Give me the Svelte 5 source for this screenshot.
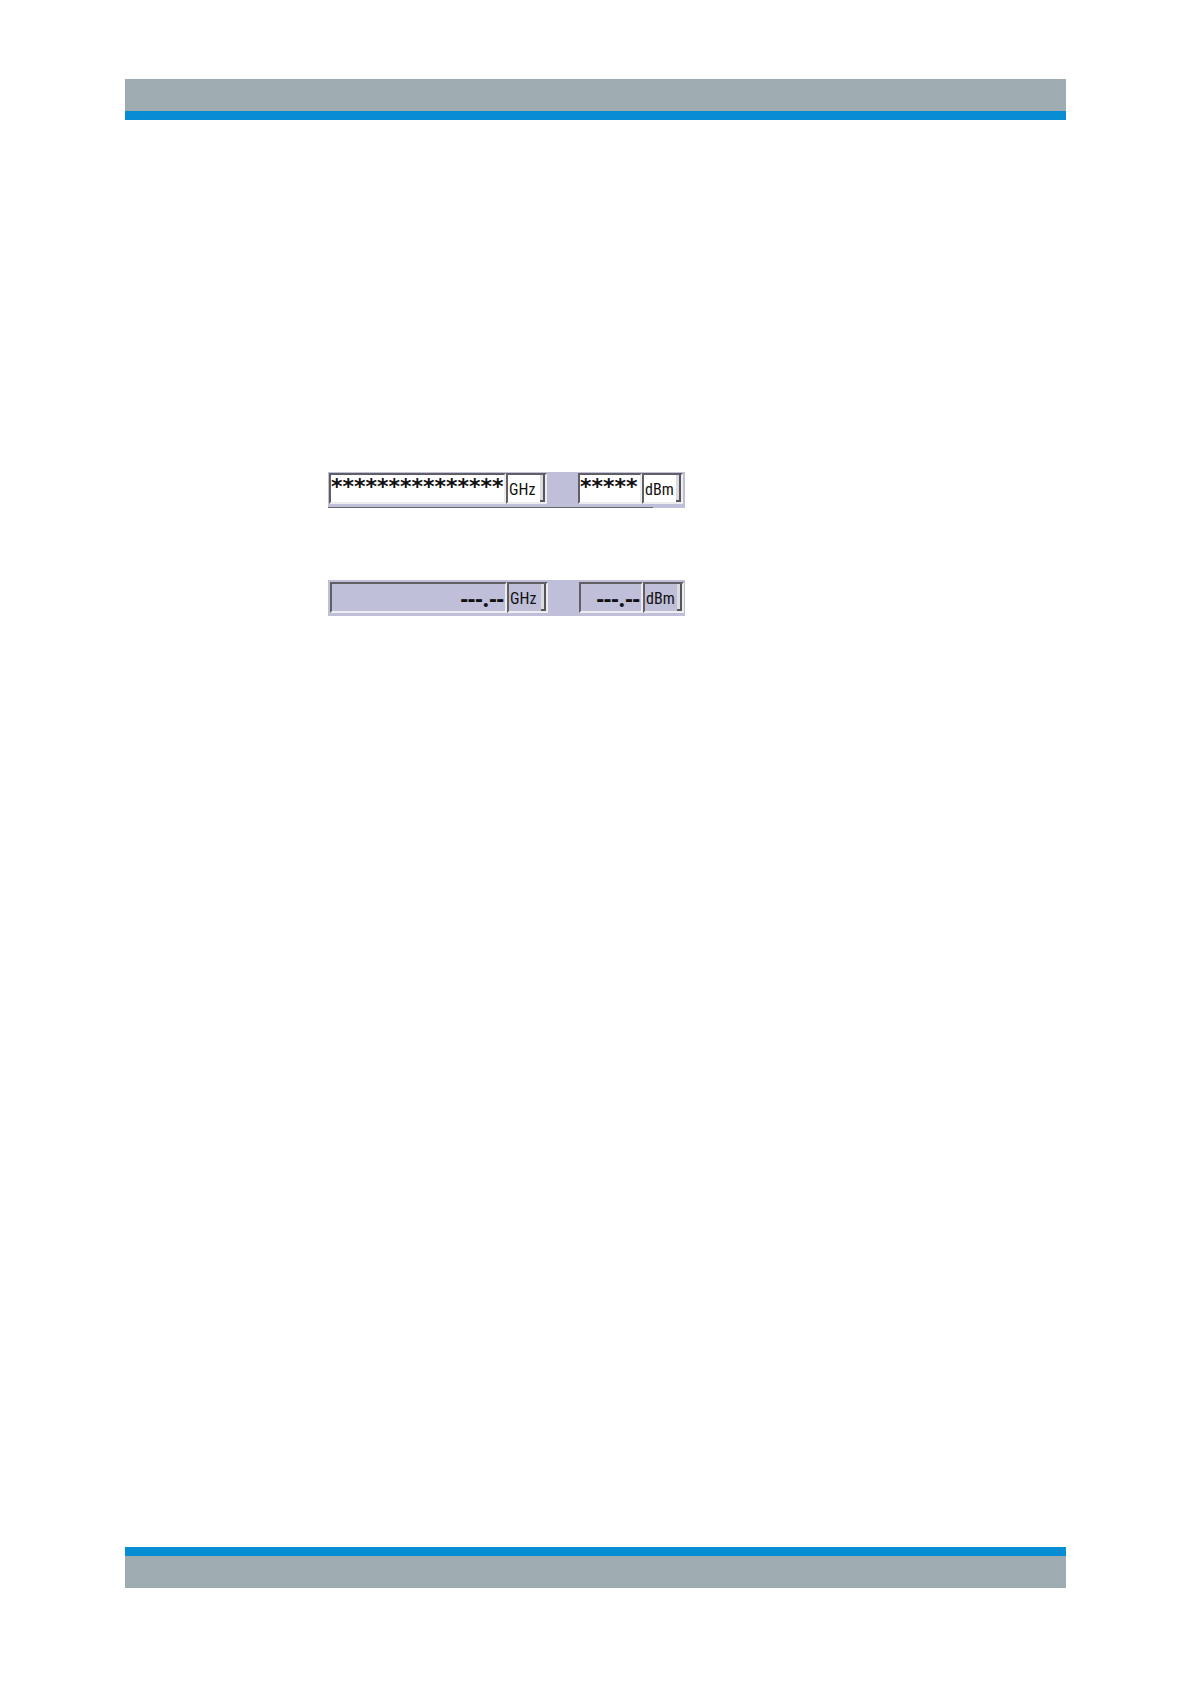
<script lang="ts">
    type Field = { name: string; value: string; unit: string; size: 'wide' | 'narrow' };

    const rows: { state: 'hidden-values' | 'no-values'; fields: Field[] }[] = [
        {
            state: 'hidden-values',
            fields: [
                { name: 'Frequency', value: '***************', unit: 'GHz', size: 'wide' },
                { name: 'Level', value: '*****', unit: 'dBm', size: 'narrow' },
            ],
        },
        {
            state: 'no-values',
            fields: [
                { name: 'Frequency', value: '---.--', unit: 'GHz', size: 'wide' },
                { name: 'Level', value: '---.--', unit: 'dBm', size: 'narrow' },
            ],
        },
    ];
</script>

<div class="page">
    <header class="band"></header>
    <main>
        {#each rows as row}
            <div class="row {row.state}">
                {#each row.fields as field}
                    <div class="field {field.size}">
                        <input type="text" aria-label={field.name} value={field.value} readonly />
                        <select aria-label="{field.name} unit">
                            <option>{field.unit}</option>
                        </select>
                    </div>
                {/each}
            </div>
        {/each}
    </main>
    <footer class="band"></footer>
</div>

<style>
    :global(body) {
        margin: 0;
        background: #fff;
    }
    .page {
        box-sizing: border-box;
        min-height: 100vh;
        display: flex;
        flex-direction: column;
        padding: 79px 125px 96px;
    }
    .band {
        height: 32px;
        background: #9eabb0;
    }
    header.band {
        border-bottom: 9px solid #078dd3;
    }
    footer.band {
        border-top: 9px solid #078dd3;
    }
    main {
        flex: 1;
        display: flex;
        flex-direction: column;
        align-items: flex-start;
        gap: 72px;
        padding: 352px 0 0 203px;
    }
    .row {
        box-sizing: border-box;
        width: 357px;
        height: 36px;
        display: flex;
        justify-content: space-between;
        padding: 1px 2px 4px 1px;
        background: #c0bfd9;
    }
    .field {
        display: flex;
    }
    input,
    select {
        appearance: none;
        box-sizing: border-box;
        height: 31px;
        margin: 0;
        border: 2px solid;
        border-color: #606064 #ededf0 #ededf0 #606064;
        border-radius: 0;
        outline: none;
        color: #111;
    }
    .wide input {
        width: 177px;
    }
    .narrow input {
        width: 64px;
    }
    select {
        width: 41px;
        padding: 2px 0 0 1px;
        font: 16px/24px 'Roboto Condensed', 'Open Sans Condensed', Roboto, sans-serif;
        /* raised edge of the drop-down: light bar, then a dark corner */
        background:
            linear-gradient(#55555a, #55555a) right 0 bottom 0 / 2px 100% no-repeat,
            linear-gradient(#55555a, #55555a) right 0 bottom 0 / 5px 2px no-repeat,
            linear-gradient(#dcdce0, #dcdce0) right 2px top 0 / 3px 100% no-repeat;
    }
    .hidden-values {
        position: relative;
    }
    /* shadow line under the row, it stops short of the right edge */
    .hidden-values::after {
        content: '';
        position: absolute;
        left: 0;
        right: 32px;
        bottom: 0;
        height: 1px;
        background: #65656f;
    }
    .hidden-values input {
        padding: 0 0 4px;
        background: #fff;
        font: bold 22px/22px 'DejaVu Sans', sans-serif;
    }
    .hidden-values select {
        background-color: #fff;
    }
    .no-values {
        padding: 2px 1px 3px 2px;
    }
    .no-values input {
        padding: 0 1px;
        background: #c0bfd9;
        font: bold 23px/26px 'Open Sans', sans-serif;
        text-align: right;
    }
    .no-values select {
        background-color: #c0bfd9;
    }
</style>
